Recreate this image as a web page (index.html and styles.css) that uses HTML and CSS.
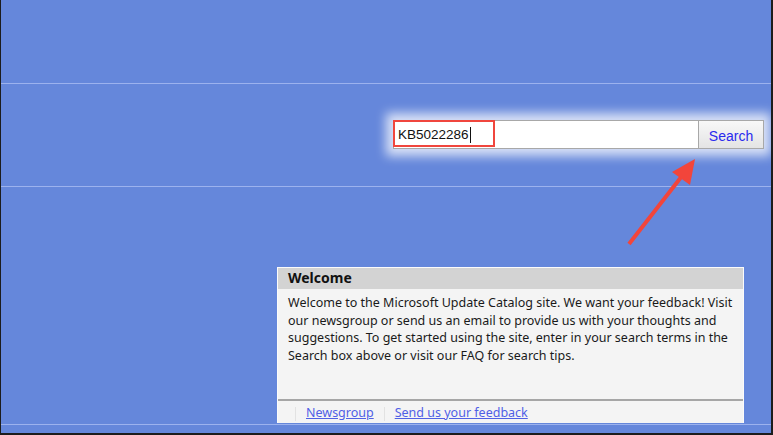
FILE: index.html
```html
<!DOCTYPE html>
<html>

<head>
  <meta name="viewport" content="width=device-width, initial-scale=1">
  <link rel="stylesheet" href="styles.css">
</head>

<body>

  <div class="page">
    <div class="topbar"></div>

    <div class="searchbar">
      <form class="searchform">
        <div class="searchfield">
          <span class="typed">KB5022286<span class="caret"></span></span>
        </div>
        <button type="button" class="searchbtn">Search</button>
      </form>
    </div>

    <div class="content">
      <div class="welcome">
        <div class="welcome-head">Welcome</div>
        <p class="welcome-text">Welcome to the Microsoft Update Catalog site. We want your feedback! Visit
          our newsgroup or send us an email to provide us with your thoughts and suggestions. To get started
          using the site, enter in your search terms in the Search box above or visit our FAQ for search tips.</p>
        <div class="welcome-links">
          <span class="sep"></span><a href="#">Newsgroup</a>
          <span class="sep"></span><a href="#">Send us your feedback</a>
        </div>
      </div>
    </div>

    <div class="bottombar"></div>

    <!-- annotation arrow pointing at the search button -->
    <svg class="arrow" width="773" height="435" viewBox="0 0 773 435">
      <line x1="629" y1="244" x2="682" y2="176" stroke="#f2453b" stroke-width="4" />
      <polygon points="695,159 672,172 690,185" fill="#f2453b" />
    </svg>
  </div>

</body>

</html>
```

FILE: styles.css
```css
* {
  box-sizing: border-box;
}

body {
  margin: 0;
  background-color: #1c1c1c;
  font-family: "Noto Sans", "Open Sans", sans-serif;
}

/* whole window, dark frame round the blue area */
.page {
  position: relative;
  width: 773px;
  height: 435px;
  border-left: 1px solid #1c1c1c;
  border-right: 2px solid #1c1c1c;
  border-bottom: 2px solid #1c1c1c;
  background-color: #6587db;
  display: flex;
  flex-direction: column;
  overflow: hidden;
}

.topbar {
  height: 84px;
  border-bottom: 1px solid #9cb2ee;
}

.searchbar {
  height: 103px;
  border-bottom: 1px solid #9cb2ee;
  display: flex;
  justify-content: flex-end;
  padding: 36px 7px 0 0;
}

.searchform {
  display: flex;
  height: 29px;
  box-shadow: 0 0 10px 7px rgba(255, 255, 255, 0.75);
}

.searchfield {
  width: 305px;
  background: white;
  border: 1px solid #a8a8a8;
  border-right: none;
}

/* red highlight round the typed query */
.typed {
  display: inline-flex;
  align-items: center;
  width: 102px;
  height: 27px;
  margin: -1px 0 0 -1px;
  padding: 2px 0 0 3px;
  border: 2px solid #f0463d;
  font-family: "Liberation Sans", Arial, sans-serif;
  font-size: 13.5px;
  color: #111;
}

.caret {
  display: inline-block;
  width: 1px;
  height: 16px;
  margin-left: 1px;
  background: #111;
}

.searchbtn {
  width: 66px;
  border: 1px solid #a8a8a8;
  background: linear-gradient(#f8f8f8, #e4e4e4);
  color: #2a2aee;
  font-family: "Liberation Sans", Arial, sans-serif;
  font-size: 14px;
  padding: 2px 0 0 0;
}

.content {
  flex: 1;
  padding: 80px 0 0 276px;
  border-bottom: 1px solid #9cb2ee;
}

.welcome {
  width: 467px;
  height: 156px;
  background: #f4f4f4;
  border: 1px solid #fbfbfb;
  border-bottom: none;
  display: flex;
  flex-direction: column;
}

.welcome-head {
  background: #d3d3d3;
  height: 21px;
  padding: 0 0 0 10px;
  font-size: 14px;
  font-weight: bold;
  color: #111;
}

.welcome-text {
  margin: 0;
  padding: 5px 8px 0 10px;
  font-size: 12.5px;
  line-height: 17.6px;
  color: #1a1a1a;
  flex: 1;
}

.welcome-links {
  height: 24px;
  border-top: 2px solid #a6a6a6;
  padding: 3px 0 0 17px;
  display: flex;
  align-items: flex-start;
  font-size: 12.5px;
}

.welcome-links a {
  color: #5060e6;
  margin-right: 10px;
}

.sep {
  width: 1px;
  height: 14px;
  margin: 3px 10px 0 0;
  background: #e2e2e2;
}

.bottombar {
  height: 8px;
}

.arrow {
  position: absolute;
  left: -1px;
  top: 0;
  pointer-events: none;
}
```
